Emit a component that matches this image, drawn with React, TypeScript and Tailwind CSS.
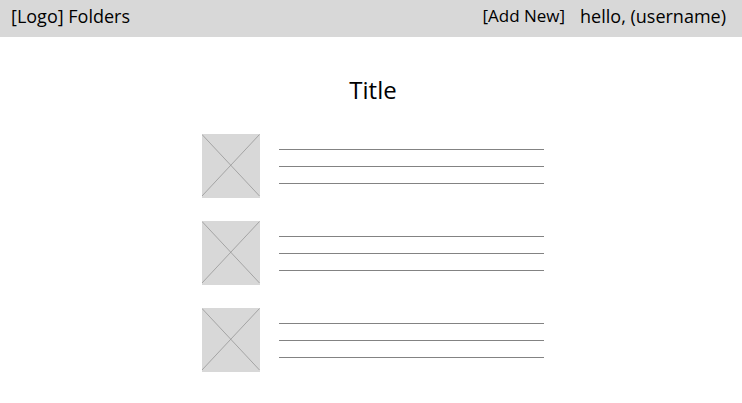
const items = [1, 2, 3];

function Placeholder() {
  return (
    <svg className="h-16 w-[58px] shrink-0 bg-[#d8d8d8]" viewBox="0 0 58 64" role="img" aria-label="Image placeholder">
      <path d="M0 0.5L57.5 62M57.5 0.5L0 62" stroke="#979797" strokeWidth="0.8" fill="none" />
    </svg>
  );
}

function Row() {
  return (
    <li className="flex gap-[19px]">
      <Placeholder />
      <div className="flex flex-1 flex-col gap-4 pt-[15px]">
        <hr className="border-t border-[#838383]" />
        <hr className="border-t border-[#838383]" />
        <hr className="border-t border-[#838383]" />
      </div>
    </li>
  );
}

export default function App() {
  return (
    <div className="min-h-screen bg-white font-['Open_Sans',sans-serif] text-black">
      <header className="flex h-[37px] items-center justify-between bg-[#d8d8d8] pr-4 pb-1.5 pl-[11px] text-[18px] leading-6">
        <a href="#folders">[Logo] Folders</a>
        <div className="flex items-center gap-[15px]">
          <button type="button" className="text-[17px]">[Add New]</button>
          <a href="#account">hello, (username)</a>
        </div>
      </header>
      <main className="mx-auto flex w-full max-w-[346px] flex-col pl-1">
        <h1 className="mt-[35px] text-center text-[24px] leading-9">Title</h1>
        <ul className="mt-[26px] flex flex-col gap-[23px]">
          {items.map((item) => (
            <Row key={item} />
          ))}
        </ul>
      </main>
    </div>
  );
}
